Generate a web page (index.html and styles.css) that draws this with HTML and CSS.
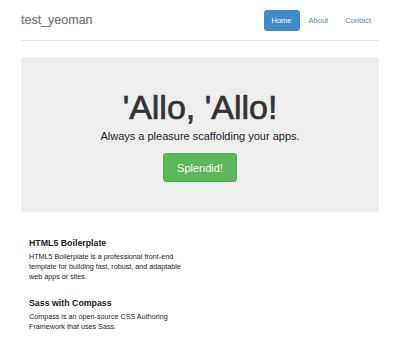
FILE: index.html
```html
<!DOCTYPE html>
<html lang="en">
<head>
  <meta charset="UTF-8">
  <title>test_yeoman</title>
  <link rel="stylesheet" href="styles.css">
</head>
<body>
  <div class="container">
    <div class="header">
      <h3 class="brand">test_yeoman</h3>
      <ul class="nav">
        <li class="active"><a href="#">Home</a></li>
        <li><a href="#">About</a></li>
        <li><a href="#">Contact</a></li>
      </ul>
    </div>

    <div class="jumbotron">
      <h1>'Allo, 'Allo!</h1>
      <p class="lead">Always a pleasure scaffolding your apps.</p>
      <a class="btn-success" href="#">Splendid!</a>
    </div>

    <div class="marketing">
      <h4>HTML5 Boilerplate</h4>
      <p>HTML5 Boilerplate is a professional front-end template for building fast, robust, and adaptable web apps or sites.</p>

      <h4>Sass with Compass</h4>
      <p>Compass is an open-source CSS Authoring Framework that uses Sass.</p>

      <h4>Bootstrap</h4>
      <p>Sleek, intuitive, and powerful mobile first front-end framework for faster and easier web development.</p>
    </div>
  </div>
</body>
</html>
```

FILE: styles.css
```css
body {
  margin: 0;
  font-family: "Liberation Sans", Arial, sans-serif;
  color: #333;
  background-color: #fff;
}

.container {
  padding: 0 21px;
}

.header {
  display: flex;
  justify-content: space-between;
  align-items: center;
  padding: 10px 0 9px;
  border-bottom: 1px solid #e5e5e5;
}

.brand {
  margin: 0;
  font-size: 12.5px;
  font-weight: normal;
  color: #777;
  line-height: 21px;
  -webkit-text-stroke: 0.2px #777;
}

.nav {
  display: flex;
  margin: 0;
  padding: 0;
  list-style: none;
}

.nav li {
  margin-left: 1px;
}

.nav a {
  display: block;
  padding: 0 8px;
  height: 21px;
  line-height: 21px;
  font-size: 7.5px;
  color: #428bca;
  text-decoration: none;
  border-radius: 3px;
}

.nav .active a {
  background-color: #428bca;
  color: #fff;
}

.jumbotron {
  margin-top: 16px;
  padding: 32px 0 30px;
  text-align: center;
  background-color: #eee;
  border-radius: 4px;
}

.jumbotron h1 {
  margin: 0;
  font-size: 34px;
  font-weight: 500;
  line-height: 37px;
  color: #333;
  -webkit-text-stroke: 0.7px #333;
}

.lead {
  margin: 2px 0 9px;
  font-size: 11px;
  line-height: 16px;
  color: #222;
}

.btn-success {
  display: inline-block;
  height: 29px;
  padding: 0 13px;
  line-height: 29px;
  font-size: 11px;
  color: #fff;
  text-decoration: none;
  background-color: #5cb85c;
  border: 1px solid #4cae4c;
  border-radius: 3px;
  box-sizing: border-box;
}

.marketing {
  width: 160px;
  padding: 26px 8px 0;
}

.marketing h4 {
  margin: 0 0 3px;
  font-size: 8.8px;
  font-weight: bold;
  line-height: 11px;
  color: #222;
}

.marketing p {
  margin: 0 0 15px;
  font-size: 7.2px;
  line-height: 10.2px;
  color: #222;
}
```
